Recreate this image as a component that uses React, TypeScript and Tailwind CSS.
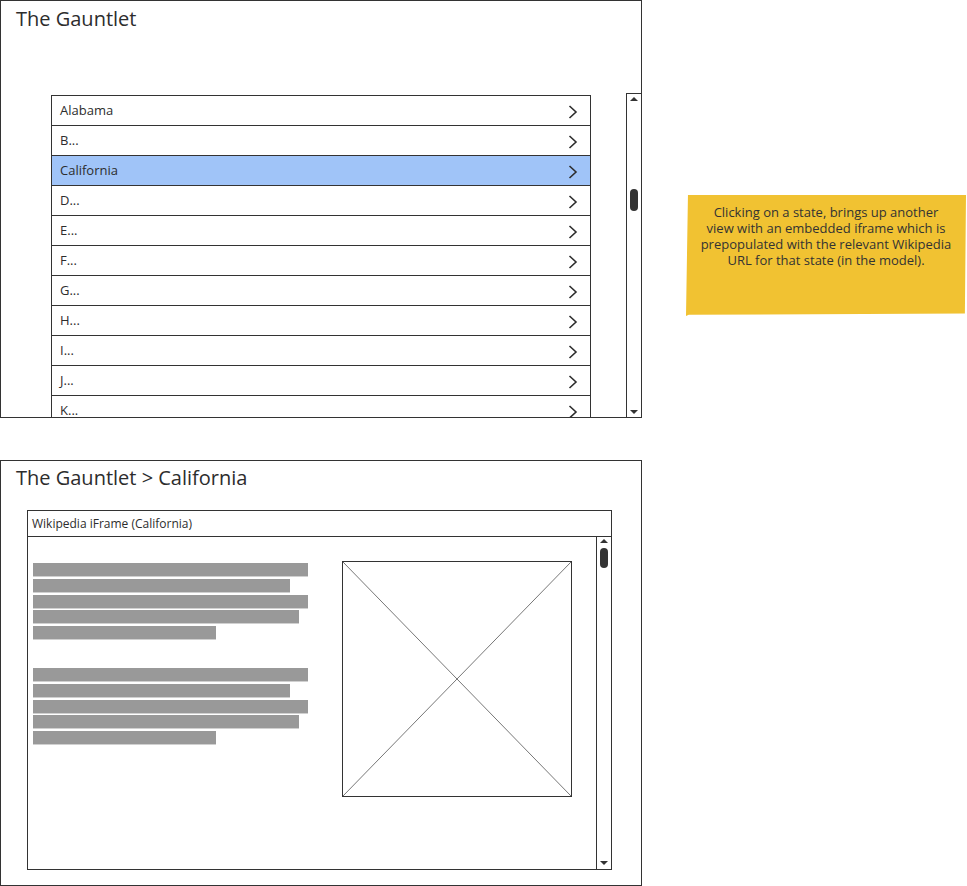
import type { JSX } from "react";

const states: string[] = ["Alabama", "B...", "California", "D...", "E...", "F...", "G...", "H...", "I...", "J...", "K..."];

const barWidths: number[] = [275, 257, 275, 266, 183];

function Chevron(): JSX.Element {
	return (
		<svg className="mt-[3px]" width="10" height="14" viewBox="0 0 10 14" fill="none">
			<path d="M1.5 1 L8 7 L1.5 13" stroke="#2d2d2d" strokeWidth="1.6" />
		</svg>
	);
}

function UpArrow({ className }: { className: string }): JSX.Element {
	return (
		<div
			className={`mx-auto h-0 w-0 border-r-[4px] border-b-[4px] border-l-[4px] border-r-transparent border-b-[#333] border-l-transparent ${className}`}
		/>
	);
}

function DownArrow({ className }: { className: string }): JSX.Element {
	return (
		<div
			className={`mx-auto h-0 w-0 border-t-[4px] border-r-[4px] border-l-[4px] border-t-[#333] border-r-transparent border-l-transparent ${className}`}
		/>
	);
}

function TextBars(): JSX.Element {
	return (
		<div className="flex flex-col gap-[1.75px]">
			{barWidths.map(
				(w: number, i: number): JSX.Element => (
					<div
						className="h-[14px] border-b border-[#d0d0d0] bg-[#999999]"
						key={i}
						style={{ width: w }}
					/>
				),
			)}
		</div>
	);
}

export default function App(): JSX.Element {
	return (
		<div className="flex h-[886px] w-[967px] flex-col bg-white font-['Open_Sans',sans-serif] text-[#2d2d2d]">
			<div className="flex items-start">
				<div className="flex h-[418px] w-[642px] flex-col border border-[#333]">
					<div className="h-[92px] pt-[4px] pl-[15px] text-[20px] leading-[28px]">The Gauntlet</div>
					<div className="flex min-h-0 flex-1">
						<div className="mt-[2px] ml-[50px] w-[540px] overflow-hidden border-t border-r border-l border-[#333]">
							{states.map(
								(s: string): JSX.Element => (
									<div
										className={`flex h-[30px] items-center justify-between border-b border-[#333] pr-[12px] pl-[8px] text-[13px] ${
											s === "California" ? "bg-[#a0c4f8]" : "bg-white"
										}`}
										key={s}
									>
										<span>{s}</span>
										<Chevron />
									</div>
								),
							)}
						</div>
						<div className="-mr-px ml-auto flex h-[325px] w-[16px] flex-col border border-[#333] bg-white">
							<UpArrow className="mt-[3px]" />
							<div className="mx-auto mt-[88px] h-[22px] w-[8px] rounded-full bg-[#333]" />
							<div className="flex-1" />
							<DownArrow className="mb-[3px]" />
						</div>
					</div>
				</div>
				<div className="mt-[195px] ml-[44px] h-[121px] w-[280px] bg-[#f1c232] pt-[9px] text-center text-[13px] leading-[16px] whitespace-nowrap text-[#333] [clip-path:polygon(0.7%_0,100%_0,99.6%_98%,1%_99%,0_100%)]">
					Clicking on a state, brings up another
					<br />
					view with an embedded iframe which is
					<br />
					prepopulated with the relevant Wikipedia
					<br />
					URL for that state (in the model).
				</div>
			</div>

			<div className="mt-[42px] flex h-[426px] w-[642px] flex-col border border-[#333]">
				<div className="h-[49px] pt-[3px] pl-[15px] text-[20px] leading-[28px]">The Gauntlet &gt; California</div>
				<div className="ml-[26px] flex h-[360px] w-[585px] flex-col border border-[#333]">
					<div className="flex h-[26px] items-center border-b border-[#333] pl-[4px] text-[12px]">
						Wikipedia iFrame (California)
					</div>
					<div className="flex flex-1">
						<div className="flex flex-1 items-start pt-[24px] pl-[5px]">
							<div className="flex w-[275px] flex-col gap-[28px] pt-[2px]">
								<TextBars />
								<TextBars />
							</div>
							<div className="relative ml-[34px] h-[236px] w-[230px] border border-[#333]">
								<svg className="absolute inset-0 h-full w-full" viewBox="0 0 228 234" preserveAspectRatio="none">
									<line x1="0" y1="0" x2="228" y2="234" stroke="#777" strokeWidth="1" />
									<line x1="228" y1="0" x2="0" y2="234" stroke="#777" strokeWidth="1" />
								</svg>
							</div>
						</div>
						<div className="flex w-[15px] flex-col border-l border-[#333]">
							<UpArrow className="mt-[2px]" />
							<div className="mx-auto mt-[5px] h-[20px] w-[8px] rounded-full bg-[#333]" />
							<div className="flex-1" />
							<DownArrow className="mb-[4px]" />
						</div>
					</div>
				</div>
			</div>
		</div>
	);
}
